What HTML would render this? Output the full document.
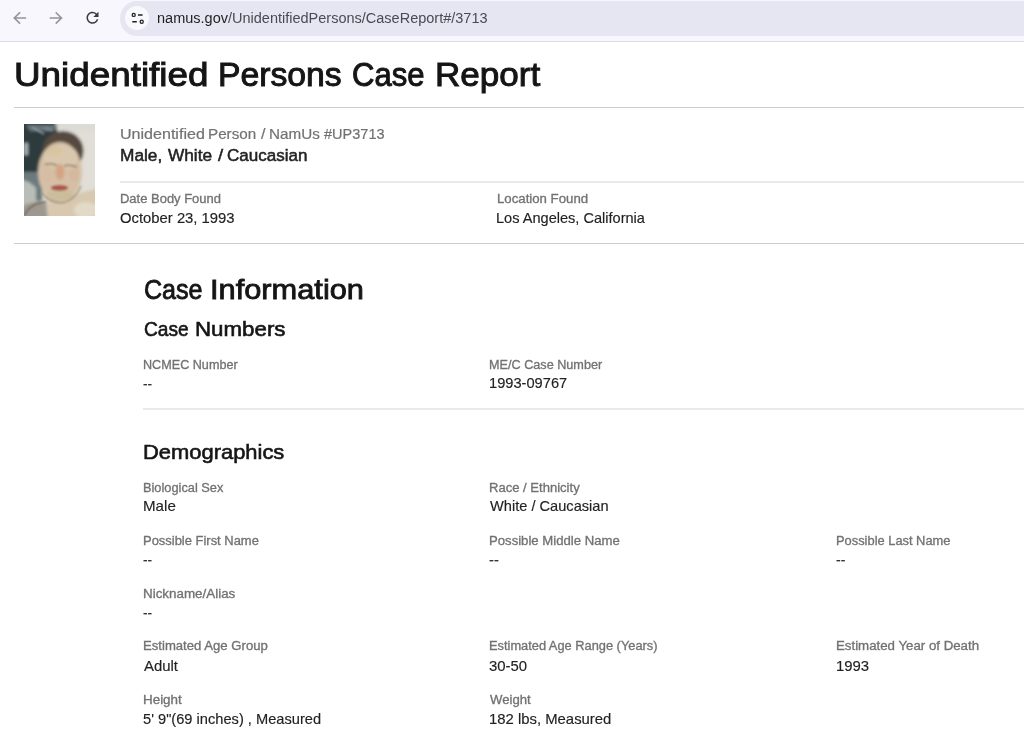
<!DOCTYPE html>
<html><head><meta charset="utf-8"><style>
html,body{margin:0;padding:0;width:1024px;height:735px;overflow:hidden;background:#fff;}
body{position:relative;font-family:"Liberation Sans",sans-serif;}
.t{position:absolute;white-space:nowrap;transform-origin:0 0;}
.bar{position:absolute;left:0;top:0;width:1024px;height:41px;background:#f8f7fd;}
.barline{position:absolute;left:0;top:41px;width:1024px;height:1px;background:#dcdbe6;}
.pill{position:absolute;left:120px;top:1.3px;width:1000px;height:34.6px;border-radius:17px;background:#e6e6f2;}
.circ{position:absolute;left:125px;top:6px;width:24px;height:24px;border-radius:12px;background:#f8f8fd;}
.rule{position:absolute;height:1px;background:#dcdcdc;}
</style></head><body>
<div class="bar"></div><div class="barline"></div>
<div class="pill"></div><div class="circ"></div>
<svg style="position:absolute;left:0;top:0" width="180" height="41" viewBox="0 0 180 41">
 <g fill="none" stroke="#94949b" stroke-width="1.6" stroke-linecap="square">
  <path d="M25.3 18 H14.5 M19.5 13 L14.3 18 L19.5 23"/>
  <path d="M50.5 18 H61.3 M56.3 13 L61.5 18 L56.3 23"/>
 </g>
 <path transform="translate(83.5 8.8) scale(0.75)" fill="#3b3b43" d="M17.65 6.35A7.958 7.958 0 0 0 12 4c-4.42 0-7.99 3.58-7.99 8s3.57 8 7.99 8c3.73 0 6.84-2.55 7.73-6h-2.08A5.99 5.99 0 0 1 12 18c-3.31 0-6-2.69-6-6s2.69-6 6-6c1.66 0 3.140.69 4.22 1.78L13 11h7V4l-2.350 2.350z"/>
 <g fill="none" stroke="#1f1f1f" stroke-width="1.25">
  <circle cx="133.7" cy="14.9" r="1.55"/>
  <circle cx="141.7" cy="21.7" r="1.55"/>
 </g>
 <path d="M138 14.9 H142.6 M132.3 21.7 H136.8" stroke="#1f1f1f" stroke-width="1.5"/>
</svg>
<div class="t" style="left:157.2px;top:9px;font-size:14px;line-height:18px;color:#1f1f1f;transform:scaleX(1.036)">namus.gov<span style="color:#4a4a52">/UnidentifiedPersons/CaseReport#/3713</span></div>
<div class="rule" style="left:14px;top:107px;width:1010px;background:#cdcdcd"></div>
<div class="rule" style="left:120px;top:181px;height:2px;width:904px;background:#e9e9e9"></div>
<div class="rule" style="left:14px;top:243px;width:1010px;background:#cdcdcd"></div>
<div class="rule" style="left:143px;top:408px;height:2px;width:881px;background:#e9e9e9"></div>
<div id="photo" style="position:absolute;left:24px;top:124px;width:71px;height:92px;overflow:hidden;background:#d8d2c8"><svg width="71" height="92" viewBox="0 0 71 92" style="position:absolute;left:0;top:0">
<defs>
<filter id="bl" x="-20%" y="-20%" width="140%" height="140%"><feGaussianBlur stdDeviation="1.5"/></filter>
<filter id="bl2" x="-20%" y="-20%" width="140%" height="140%"><feGaussianBlur stdDeviation="1.0"/></filter>
</defs>
<rect x="0" y="0" width="71" height="92" fill="#d8d5ca"/>
<g filter="url(#bl)">
<rect x="-5" y="-5" width="40" height="60" fill="#2f3a3c"/>
<path d="M-5 48 L18 48 L18 80 L-5 80Z" fill="#6b7a7e"/>
<rect x="44" y="-5" width="36" height="75" fill="#e0ded6"/>
<path d="M30 -5 L76 -5 L76 8 Q50 5 34 9Z" fill="#dcdbd5"/>
<path d="M-5 56 Q4 55 12 64 L12 82 L-5 84Z" fill="#b8bdb8"/>
<path d="M2 1 L34 1 L30 7 L6 7Z" fill="#66747a"/>
<path d="M0 19 L4 19 L4 31 L0 31Z" fill="#a4b0b4"/>
<ellipse cx="39" cy="27" rx="20.5" ry="20" fill="#54493f"/>
<ellipse cx="36" cy="48" rx="22" ry="30" fill="#d5c0a6"/>
<ellipse cx="37" cy="33" rx="17" ry="12" fill="#dac8ae"/>
<ellipse cx="30" cy="27" rx="8" ry="5" fill="#d8c4a0"/>
<path d="M-5 97 L-5 82 Q10 74 28 79 Q50 70 76 64 L76 97Z" fill="#d8c8b0"/>
<path d="M-5 97 L-5 84 Q8 75 22 79 L24 97Z" fill="#9e998f"/>
<ellipse cx="36" cy="48" rx="4.5" ry="8" fill="#d3a482"/>
<ellipse cx="24" cy="51" rx="5" ry="7" fill="#d6bca4"/>
<ellipse cx="50" cy="51" rx="5" ry="7" fill="#d4b8a0"/>
<ellipse cx="62" cy="86" rx="12" ry="8" fill="#e2dac6"/>
<ellipse cx="36" cy="71" rx="13" ry="6" fill="#cbbd9c"/>
</g>
<g filter="url(#bl2)">
<ellipse cx="35.5" cy="63.8" rx="8.5" ry="2.6" fill="#a8564a"/>
<path d="M21 40.5 Q27 38.5 33 41.5" stroke="#9c846e" stroke-width="1.4" fill="none"/>
<path d="M40 42 Q46 40 53 43" stroke="#9c846e" stroke-width="1.4" fill="none"/>
<path d="M17 68 Q26 80 40 78.5 Q52 75 57 62" stroke="#a08a70" stroke-width="1.3" fill="none"/>
<path d="M0 92 Q6 79 22 78" stroke="#6a6660" stroke-width="1.3" fill="none"/>
<path d="M8 3 L20 10" stroke="#8d9a9e" stroke-width="1.6"/>
<path d="M20 4 L28 6" stroke="#84929a" stroke-width="1.6"/>
</g>
</svg>
</div>
<div class="t" id="t0" style="left:14.05px;top:53.00px;font-size:34px;line-height:42px;color:#151515;transform:scaleX(1.0827);-webkit-text-stroke:1.0px #151515;">Unidentified</div>
<div class="t" id="t1" style="left:218.30px;top:53.00px;font-size:34px;line-height:42px;color:#151515;transform:scaleX(0.9917);-webkit-text-stroke:1.0px #151515;">Persons</div>
<div class="t" id="t2" style="left:351.71px;top:53.00px;font-size:34px;line-height:42px;color:#151515;transform:scaleX(0.9134);-webkit-text-stroke:1.0px #151515;">Case</div>
<div class="t" id="t3" style="left:434.71px;top:53.00px;font-size:34px;line-height:42px;color:#151515;transform:scaleX(1.0316);-webkit-text-stroke:1.0px #151515;">Report</div>
<div class="t" id="t4" style="left:119.87px;top:125.00px;font-size:14.5px;line-height:18px;color:#727272;transform:scaleX(1.1077);-webkit-text-stroke:0.2px #727272;">Unidentified</div>
<div class="t" id="t5" style="left:208.19px;top:125.00px;font-size:14.5px;line-height:18px;color:#727272;transform:scaleX(1.0492);-webkit-text-stroke:0.2px #727272;">Person</div>
<div class="t" id="t6" style="left:261.26px;top:125.00px;font-size:14.5px;line-height:18px;color:#727272;transform:scaleX(1.1075);-webkit-text-stroke:0.2px #727272;">/</div>
<div class="t" id="t7" style="left:269.39px;top:125.00px;font-size:14.5px;line-height:18px;color:#727272;transform:scaleX(1.0502);-webkit-text-stroke:0.2px #727272;">NamUs</div>
<div class="t" id="t8" style="left:324.36px;top:125.00px;font-size:14.5px;line-height:18px;color:#727272;transform:scaleX(1.0012);-webkit-text-stroke:0.2px #727272;">#UP3713</div>
<div class="t" id="t9" style="left:119.88px;top:145.00px;font-size:16.9px;line-height:21px;color:#222222;transform:scaleX(1.0225);-webkit-text-stroke:0.5px #222222;">Male,</div>
<div class="t" id="t10" style="left:167.72px;top:145.00px;font-size:16.9px;line-height:21px;color:#222222;transform:scaleX(1.0212);-webkit-text-stroke:0.5px #222222;">White</div>
<div class="t" id="t11" style="left:217.72px;top:145.00px;font-size:16.9px;line-height:21px;color:#222222;transform:scaleX(1.0963);-webkit-text-stroke:0.5px #222222;">/</div>
<div class="t" id="t12" style="left:227.09px;top:145.00px;font-size:16.9px;line-height:21px;color:#222222;transform:scaleX(1.0088);-webkit-text-stroke:0.5px #222222;">Caucasian</div>
<div class="t" id="t13" style="left:119.57px;top:191.00px;font-size:12.5px;line-height:16px;color:#727272;transform:scaleX(1.0379);-webkit-text-stroke:0.32px #727272;">Date Body Found</div>
<div class="t" id="t14" style="left:119.76px;top:209.00px;font-size:14.8px;line-height:18px;color:#222222;transform:scaleX(1.0023);-webkit-text-stroke:0.15px #222222;">October 23, 1993</div>
<div class="t" id="t15" style="left:496.55px;top:191.00px;font-size:12.5px;line-height:16px;color:#727272;transform:scaleX(1.0570);-webkit-text-stroke:0.32px #727272;">Location Found</div>
<div class="t" id="t16" style="left:496.40px;top:209.00px;font-size:14.8px;line-height:18px;color:#222222;transform:scaleX(0.9841);-webkit-text-stroke:0.15px #222222;">Los Angeles, California</div>
<div class="t" id="t17" style="left:143.97px;top:272.00px;font-size:28.3px;line-height:35px;color:#151515;transform:scaleX(0.8868);-webkit-text-stroke:0.85px #151515;">Case</div>
<div class="t" id="t18" style="left:209.99px;top:272.00px;font-size:28.3px;line-height:35px;color:#151515;transform:scaleX(1.0876);-webkit-text-stroke:0.85px #151515;">Information</div>
<div class="t" id="t19" style="left:143.59px;top:316.00px;font-size:20.6px;line-height:26px;color:#151515;transform:scaleX(0.9299);-webkit-text-stroke:0.6px #151515;">Case</div>
<div class="t" id="t20" style="left:194.98px;top:316.00px;font-size:20.6px;line-height:26px;color:#151515;transform:scaleX(1.0834);-webkit-text-stroke:0.6px #151515;">Numbers</div>
<div class="t" id="t21" style="left:142.90px;top:357.00px;font-size:12.5px;line-height:16px;color:#727272;transform:scaleX(1.0091);-webkit-text-stroke:0.32px #727272;">NCMEC Number</div>
<div class="t" id="t22" style="left:143.24px;top:375.00px;font-size:14.8px;line-height:18px;color:#333;transform:scaleX(0.9262);-webkit-text-stroke:0.2px #333;">--</div>
<div class="t" id="t23" style="left:489.29px;top:357.00px;font-size:12.5px;line-height:16px;color:#727272;transform:scaleX(1.0122);-webkit-text-stroke:0.32px #727272;">ME/C Case Number</div>
<div class="t" id="t24" style="left:489.16px;top:374.00px;font-size:14.8px;line-height:18px;color:#222222;transform:scaleX(0.9895);-webkit-text-stroke:0.15px #222222;">1993-09767</div>
<div class="t" id="t25" style="left:143.30px;top:439.00px;font-size:20.6px;line-height:26px;color:#151515;transform:scaleX(1.0643);-webkit-text-stroke:0.6px #151515;">Demographics</div>
<div class="t" id="t26" style="left:142.88px;top:480.00px;font-size:12.5px;line-height:16px;color:#727272;transform:scaleX(1.0232);-webkit-text-stroke:0.32px #727272;">Biological Sex</div>
<div class="t" id="t27" style="left:142.65px;top:497.00px;font-size:14.8px;line-height:18px;color:#222222;transform:scaleX(1.0226);-webkit-text-stroke:0.15px #222222;">Male</div>
<div class="t" id="t28" style="left:488.87px;top:480.00px;font-size:12.5px;line-height:16px;color:#727272;transform:scaleX(1.0441);-webkit-text-stroke:0.32px #727272;">Race / Ethnicity</div>
<div class="t" id="t29" style="left:489.69px;top:497.00px;font-size:14.8px;line-height:18px;color:#222222;transform:scaleX(0.9874);-webkit-text-stroke:0.15px #222222;">White / Caucasian</div>
<div class="t" id="t30" style="left:142.87px;top:533.00px;font-size:12.5px;line-height:16px;color:#727272;transform:scaleX(1.0357);-webkit-text-stroke:0.32px #727272;">Possible First Name</div>
<div class="t" id="t31" style="left:143.24px;top:551.00px;font-size:14.8px;line-height:18px;color:#333;transform:scaleX(0.9262);-webkit-text-stroke:0.2px #333;">--</div>
<div class="t" id="t32" style="left:488.86px;top:533.00px;font-size:12.5px;line-height:16px;color:#727272;transform:scaleX(1.0509);-webkit-text-stroke:0.32px #727272;">Possible Middle Name</div>
<div class="t" id="t33" style="left:489.20px;top:551.00px;font-size:14.8px;line-height:18px;color:#333;transform:scaleX(0.9940);-webkit-text-stroke:0.2px #333;">--</div>
<div class="t" id="t34" style="left:835.68px;top:533.00px;font-size:12.5px;line-height:16px;color:#727272;transform:scaleX(1.0296);-webkit-text-stroke:0.32px #727272;">Possible Last Name</div>
<div class="t" id="t35" style="left:836.02px;top:551.00px;font-size:14.8px;line-height:18px;color:#333;transform:scaleX(0.9488);-webkit-text-stroke:0.2px #333;">--</div>
<div class="t" id="t36" style="left:142.84px;top:586.00px;font-size:12.5px;line-height:16px;color:#727272;transform:scaleX(1.0716);-webkit-text-stroke:0.32px #727272;">Nickname/Alias</div>
<div class="t" id="t37" style="left:143.24px;top:604.00px;font-size:14.8px;line-height:18px;color:#333;transform:scaleX(0.9262);-webkit-text-stroke:0.2px #333;">--</div>
<div class="t" id="t38" style="left:142.86px;top:638.00px;font-size:12.5px;line-height:16px;color:#727272;transform:scaleX(1.0502);-webkit-text-stroke:0.32px #727272;">Estimated Age Group</div>
<div class="t" id="t39" style="left:143.66px;top:657.00px;font-size:14.8px;line-height:18px;color:#222222;transform:scaleX(1.0079);-webkit-text-stroke:0.15px #222222;">Adult</div>
<div class="t" id="t40" style="left:488.88px;top:638.00px;font-size:12.5px;line-height:16px;color:#727272;transform:scaleX(1.0259);-webkit-text-stroke:0.32px #727272;">Estimated Age Range (Years)</div>
<div class="t" id="t41" style="left:489.00px;top:657.00px;font-size:14.8px;line-height:18px;color:#222222;transform:scaleX(1.0079);-webkit-text-stroke:0.15px #222222;">30-50</div>
<div class="t" id="t42" style="left:835.65px;top:638.00px;font-size:12.5px;line-height:16px;color:#727272;transform:scaleX(1.0612);-webkit-text-stroke:0.32px #727272;">Estimated Year of Death</div>
<div class="t" id="t43" style="left:835.54px;top:657.00px;font-size:14.8px;line-height:18px;color:#222222;transform:scaleX(1.0071);-webkit-text-stroke:0.15px #222222;">1993</div>
<div class="t" id="t44" style="left:142.83px;top:692.00px;font-size:12.5px;line-height:16px;color:#727272;transform:scaleX(1.0728);-webkit-text-stroke:0.32px #727272;">Height</div>
<div class="t" id="t45" style="left:142.94px;top:710.00px;font-size:14.8px;line-height:18px;color:#222222;transform:scaleX(0.9896);-webkit-text-stroke:0.15px #222222;">5' 9"(69 inches) , Measured</div>
<div class="t" id="t46" style="left:489.78px;top:692.00px;font-size:12.5px;line-height:16px;color:#727272;transform:scaleX(1.0532);-webkit-text-stroke:0.32px #727272;">Weight</div>
<div class="t" id="t47" style="left:488.75px;top:710.00px;font-size:14.8px;line-height:18px;color:#222222;transform:scaleX(1.0049);-webkit-text-stroke:0.15px #222222;">182 lbs, Measured</div>
</body></html>
